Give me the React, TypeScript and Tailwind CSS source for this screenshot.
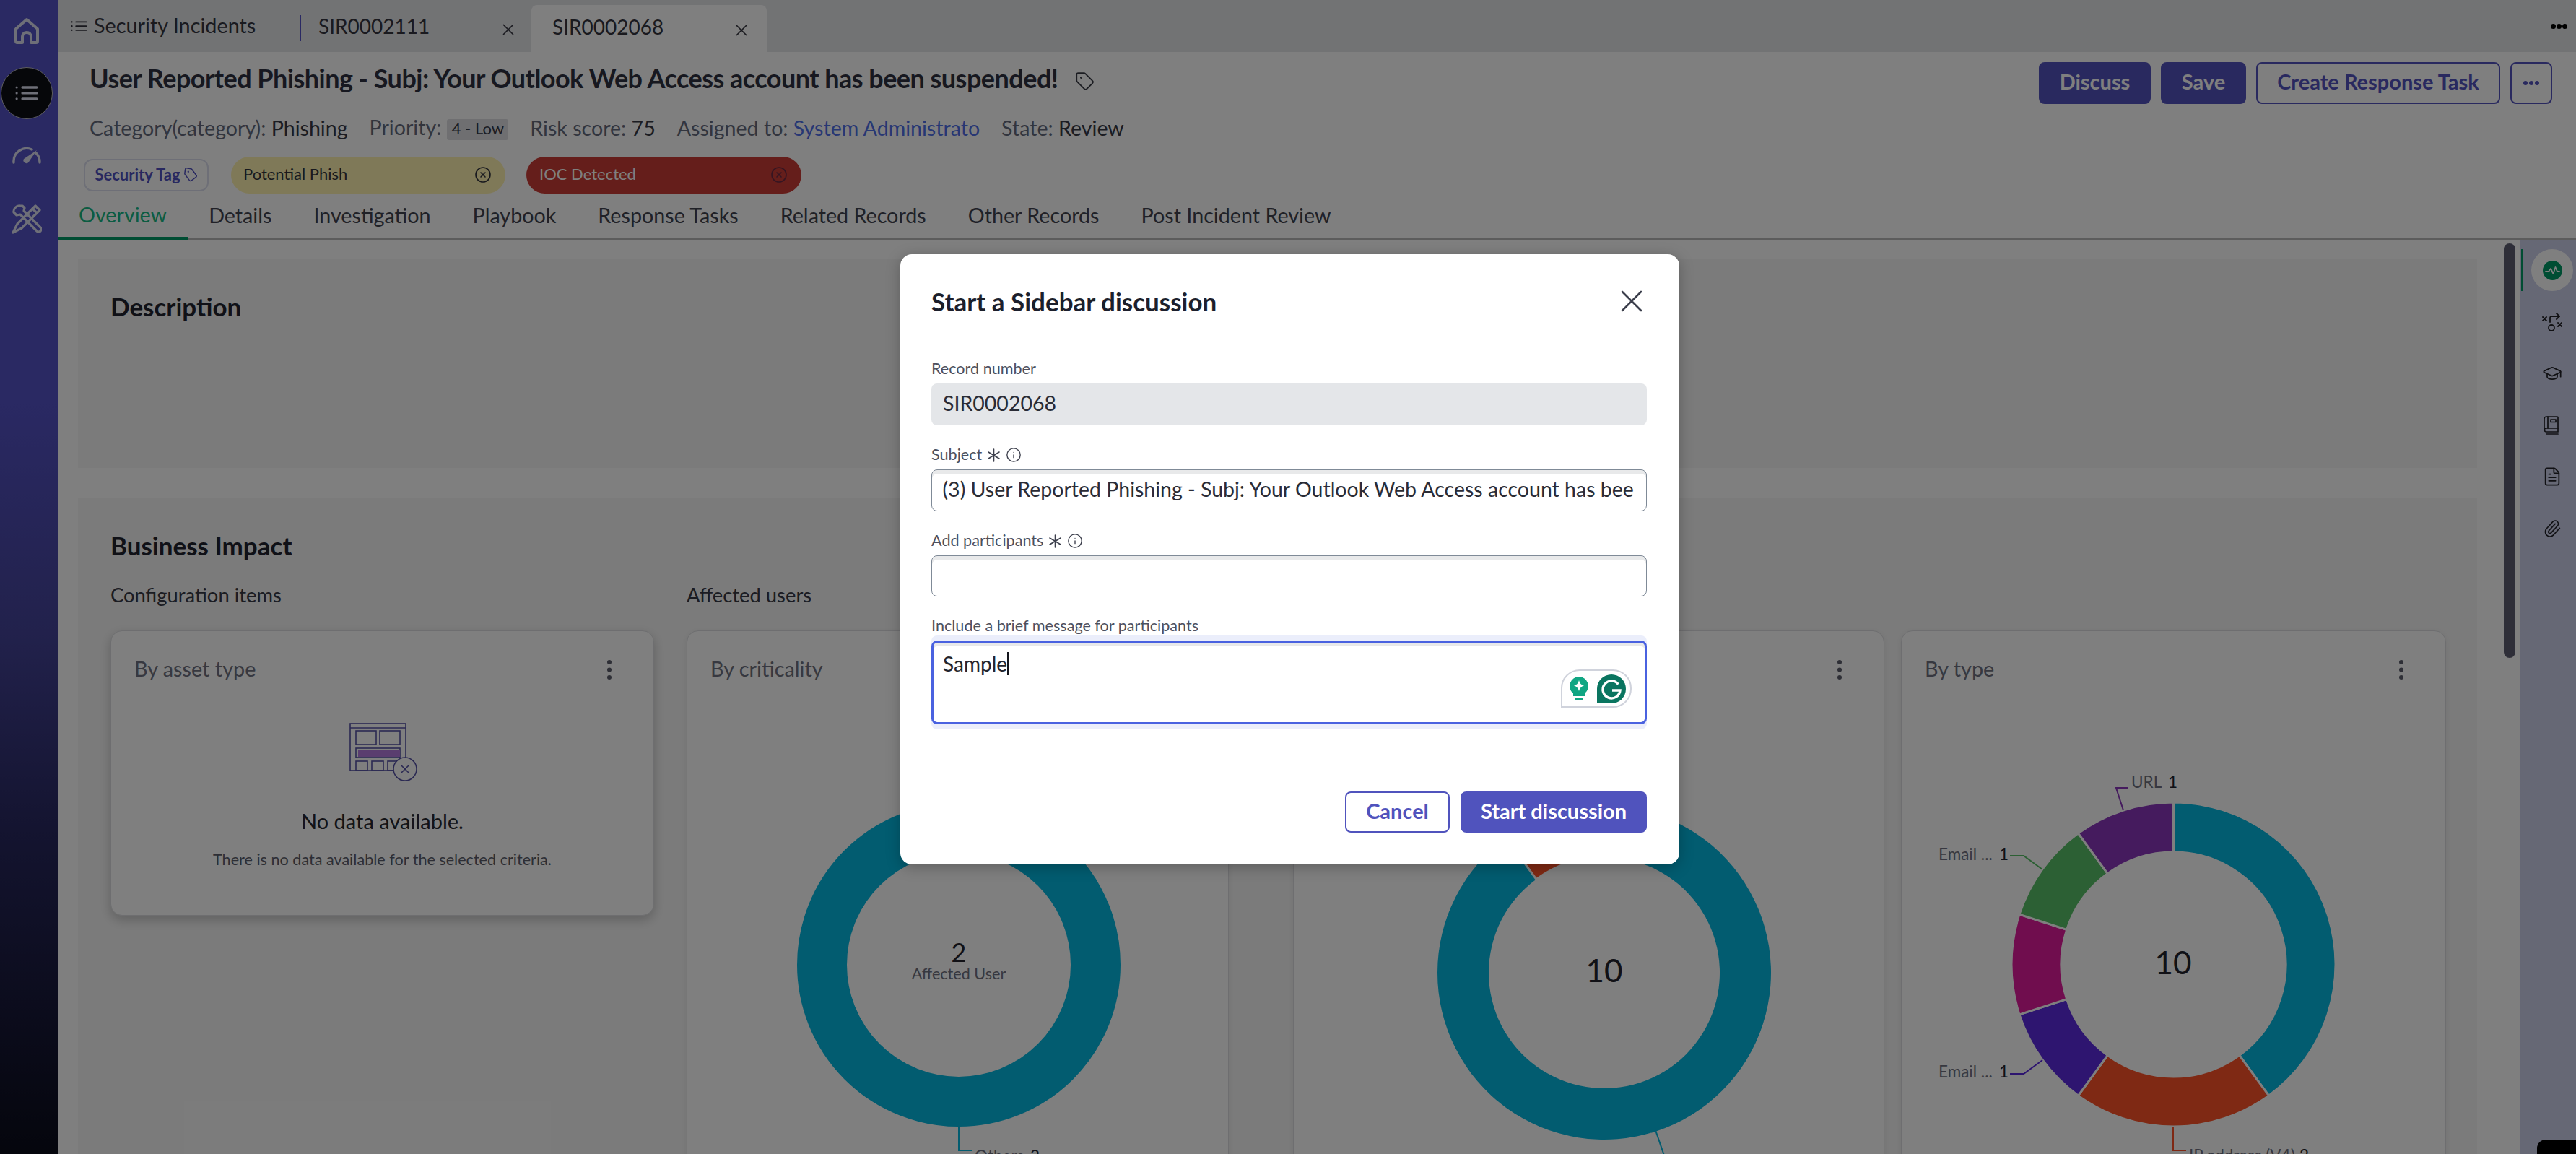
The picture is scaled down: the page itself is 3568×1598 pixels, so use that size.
import React from "react";
import { CircleX, FileText, GraduationCap, Info, Paperclip, Tag, X } from "lucide-react";

const pt = (cx: number, cy: number, r: number, deg: number) => {
  const a = ((deg - 90) * Math.PI) / 180;
  return [cx + r * Math.cos(a), cy + r * Math.sin(a)];
};
const arc = (cx: number, cy: number, R: number, r: number, a0: number, a1: number) => {
  const [x0, y0] = pt(cx, cy, R, a0);
  const [x1, y1] = pt(cx, cy, R, a1);
  const [x2, y2] = pt(cx, cy, r, a1);
  const [x3, y3] = pt(cx, cy, r, a0);
  const large = a1 - a0 > 180 ? 1 : 0;
  return `M${x0} ${y0} A${R} ${R} 0 ${large} 1 ${x1} ${y1} L${x2} ${y2} A${r} ${r} 0 ${large} 0 ${x3} ${y3} Z`;
};

const Kebab = () => (
  <svg width="6" height="27" viewBox="0 0 6 27" className="shrink-0">
    <circle cx="3" cy="3" r="3" fill="#5c5e6c" />
    <circle cx="3" cy="13.5" r="3" fill="#5c5e6c" />
    <circle cx="3" cy="24" r="3" fill="#5c5e6c" />
  </svg>
);

const ListIcon = ({ w, c, sw }: { w: number; c: string; sw: number }) => (
  <svg width={w} height={w * 0.62} viewBox="0 0 32 20" fill="none" stroke={c} strokeLinecap="round">
    <path d="M10 2h20M10 10h20M10 18h20" strokeWidth={sw} />
    <circle cx="2" cy="2" r="1.6" fill={c} stroke="none" />
    <circle cx="2" cy="10" r="1.6" fill={c} stroke="none" />
    <circle cx="2" cy="18" r="1.6" fill={c} stroke="none" />
  </svg>
);

const Required = () => (
  <svg width="19" height="19" viewBox="0 0 19 19" stroke="#3c3f4c" strokeWidth="1.6" strokeLinecap="round" className="ml-[7px] shrink-0">
    <path d="M9.5 1v17M2 5l15 9M17 5L2 14" />
  </svg>
);

const Card = ({ w, h, title, children, shadow }: { w: string; h: string; title: string; children?: React.ReactNode; shadow?: boolean }) => (
  <div className={`${w} ${h} shrink-0 rounded-[16px] border border-[#dcdde0] bg-white ${shadow ? "shadow-[0_6px_16px_rgba(0,0,0,0.22)]" : "shadow-[0_2px_10px_rgba(0,0,0,0.08)]"}`}>
    <div className="flex h-[106px] items-center justify-between pl-[32px] pr-[58px]">
      <span className="text-[28.8px] text-[#6e7180]">{title}</span>
      <Kebab />
    </div>
    {children}
  </div>
);

const Label = ({ children, req }: { children: string; req?: boolean }) => (
  <div className="flex h-[26px] items-center text-[21.6px] leading-none text-[#4d505e]">
    <span>{children}</span>
    {req && <Required />}
    {req && <Info size={22} strokeWidth={1.5} color="#3c3f4c" className="ml-[7px]" />}
  </div>
);

export default function App() {
  return (
    <div className="relative flex h-[1598px] w-[3568px] overflow-hidden bg-white [font-family:Lato,'Noto_Sans',sans-serif]">
      {/* left navigation */}
      <aside className="flex h-full w-[80px] shrink-0 flex-col items-center bg-[linear-gradient(to_bottom,#5452c6_0%,#5452c6_35%,#444398_55%,#282860_72%,#0a0c1a_100%)] text-[#dcdef0]">
        <svg width="40" height="40" viewBox="0 0 40 40" fill="none" stroke="currentColor" strokeWidth="4" strokeLinejoin="round" className="mt-[23px] -translate-x-[3px]">
          <path d="M14 36H7a2 2 0 0 1-2-2V17L20 4l15 13v17a2 2 0 0 1-2 2h-7v-8a6 6 0 0 0-12 0z" />
        </svg>
        <div className="mt-[30px] flex h-[72px] w-[72px] -translate-x-[3px] items-center justify-center rounded-full border border-[#bdbdbd] bg-[#0d0e14]">
          <ListIcon w={32} c="#dcdef0" sw={3.4} />
        </div>
        <svg width="40" height="24" viewBox="0 0 40 24" fill="none" className="mt-[38px] -translate-x-[3px]">
          <path d="M2 22A18 18 0 0 1 27 4M33 9a18 18 0 0 1 5 13" stroke="currentColor" strokeWidth="3.4" strokeLinecap="round" />
          <path d="M34 5L23 21a4 4 0 0 1-7-4z" fill="currentColor" />
        </svg>
        <svg width="42" height="42" viewBox="0 0 42 42" fill="none" stroke="currentColor" strokeWidth="3.2" strokeLinejoin="round" strokeLinecap="round" className="mt-[55px] -translate-x-[3px]">
          <path d="M12 3a8 8 0 0 0-9 9l4 4 5-1 23 23a3.5 3.5 0 0 0 5-5L17 10l1-4-3-3z" />
          <path d="M33 3l6 6-25 25-12 6 6-12z" />
          <path d="M29 7l6 6" />
        </svg>
      </aside>

      <main className="flex min-w-0 flex-1 flex-col text-[#444856]">
        {/* tabs bar */}
        <div className="flex h-[72px] shrink-0 bg-[#e4e6e9] text-[28px] text-[#34343e]">
          <div className="flex w-[335px] items-center gap-[9px] pl-[18px]">
            <ListIcon w={23} c="#30303a" sw={2.6} />
            <span className="text-[28.8px]">Security Incidents</span>
          </div>
          <div className="mt-[21px] h-[36px] w-[2px] bg-[#5452c6]" />
          <div className="flex w-[319px] items-center justify-between pl-[24px] pr-[19px]">
            <span>SIR0002111</span>
            <X size={26} strokeWidth={1.6} className="translate-y-[5px]" />
          </div>
          <div className="mt-[7px] flex w-[326px] items-center justify-between rounded-t-[8px] bg-white pl-[29px] pr-[22px]">
            <span className="-mt-[6px]">SIR0002068</span>
            <X size={26} strokeWidth={1.6} className="translate-y-[2px]" />
          </div>
          <div className="ml-auto mr-[12px] flex items-center gap-[1px]">
            <span className="h-[7px] w-[7px] rounded-full bg-black" />
            <span className="h-[7px] w-[7px] rounded-full bg-black" />
            <span className="h-[7px] w-[7px] rounded-full bg-black" />
          </div>
        </div>

        {/* record header */}
        <header className="h-[260px] shrink-0 bg-white pt-[14px]">
          <div className="flex h-[58px] items-start justify-between pl-[44px] pr-[33px]">
            <div className="-mt-[7px] flex h-[58px] items-center gap-[24px]">
              <h1 className="text-[36px] font-bold tracking-[-0.53px] text-[#2e3140]">User Reported Phishing - Subj: Your Outlook Web Access account has been suspended!</h1>
              <Tag size={27} strokeWidth={1.6} color="#3a3c46" className="mt-[8px]" />
            </div>
            <div className="flex h-[58px] gap-[14px] text-[29px] font-bold">
              <button className="w-[155px] rounded-[8px] bg-[#5252be] pb-[4px] text-white">Discuss</button>
              <button className="w-[118px] rounded-[8px] bg-[#5252be] pb-[4px] text-white">Save</button>
              <button className="w-[338px] rounded-[8px] border-2 border-[#5252be] pb-[4px] text-[#5252be]">Create Response Task</button>
              <button className="flex w-[58px] items-center justify-center gap-[2px] rounded-[8px] border-2 border-[#5252be]">
                <span className="h-[6px] w-[6px] rounded-full bg-[#5252be]" />
                <span className="h-[6px] w-[6px] rounded-full bg-[#5252be]" />
                <span className="h-[6px] w-[6px] rounded-full bg-[#5252be]" />
              </button>
            </div>
          </div>
          <div className="mt-[20px] flex h-[30px] items-center gap-[30px] pl-[44px] text-[28.6px] leading-none text-[#646a7c]">
            <span className="-mt-[3px]">Category(category): <span className="text-[#363844]">Phishing</span></span>
            <span className="flex items-center gap-[8px]">
              <span className="-mt-[6px]">Priority:</span>
              <span className="flex h-[29px] w-[85px] items-center justify-center rounded-[3px] bg-[#dedfe2] pb-[2px] text-[22px] text-[#363844]">4 - Low</span>
            </span>
            <span className="-mt-[3px]">Risk score: <span className="text-[#363844]">75</span></span>
            <span className="-mt-[3px]">Assigned to: <span className="text-[#4f6fe8]">System Administrato</span></span>
            <span className="-mt-[3px]">State: <span className="text-[#363844]">Review</span></span>
          </div>
          <div className="mt-[23px] flex h-[51px] items-center pl-[36px] text-[22px] leading-none">
            <div className="flex h-[45px] w-[173px] items-center justify-center gap-[4px] rounded-[12px] border-2 border-[#dcdfee] pb-[2px] font-bold text-[#5050c0]">
              <span>Security Tag</span>
              <Tag size={20} strokeWidth={1.8} className="rotate-[8deg]" />
            </div>
            <div className="ml-[31px] flex h-[51px] w-[380px] items-center justify-between rounded-full bg-[#fef2b0] pl-[17px] pr-[19px] text-[#30323c]">
              <span className="-mt-[3px]">Potential Phish</span>
              <CircleX size={24} strokeWidth={1.6} className="-mt-[1px]" />
            </div>
            <div className="ml-[29px] flex h-[51px] w-[381px] items-center justify-between rounded-full bg-[#ca3c36] pl-[18px] pr-[19px] text-white">
              <span className="-mt-[3px]">IOC Detected</span>
              <CircleX size={24} strokeWidth={1.6} color="#6a2a44" className="-mt-[1px]" />
            </div>
          </div>
          <nav className="flex h-[64px] border-b-2 border-[#b8b8b8] text-[28.7px] text-[#40424e]">
            <div className="-mb-[2px] flex items-center border-b-4 border-[#009a66] px-[29px] pb-[1px] text-[#16b884]">Overview</div>
            {["Details", "Investigation", "Playbook", "Response Tasks", "Related Records", "Other Records", "Post Incident Review"].map((t) => (
              <div key={t} className="flex items-center px-[29px] pb-[1px]">{t}</div>
            ))}
          </nav>
        </header>

        {/* page body */}
        <div className="flex min-h-0 flex-1">
          <div className="min-w-0 flex-1 overflow-hidden bg-white pl-[28px] pr-[37px] pt-[26px]">
            <section className="h-[290px] bg-[#f7f7f7] px-[45px] pt-[42px]">
              <h2 className="text-[35px] font-bold leading-[48px] text-[#20222e]">Description</h2>
            </section>
            <section className="mt-[41px] h-[920px] bg-[#f7f7f7] pl-[45px] pt-[42px]">
              <h2 className="text-[35px] font-bold leading-[48px] text-[#20222e]">Business Impact</h2>
              <div className="mt-[24px] flex gap-[45px]">
                <div className="w-[753px] shrink-0">
                  <h3 className="h-[42px] text-[27.4px] leading-[42px] text-[#363844]">Configuration items</h3>
                  <div className="mt-[28px]">
                    <Card w="w-[753px]" h="h-[395px]" title="By asset type" shadow>
                      <div className="flex flex-col items-center">
                        <svg width="94" height="82" viewBox="0 0 94 82" fill="none" stroke="#5652a6" strokeWidth="1.6" className="mt-[21px] translate-x-[1px]">
                          <rect x="1" y="1" width="77" height="65" />
                          <path d="M1 7h77" />
                          <rect x="9" y="11" width="28" height="19" />
                          <rect x="42" y="11" width="28" height="19" />
                          <rect x="9" y="35" width="61" height="13" />
                          <rect x="12" y="38" width="58" height="9" fill="#b47ade" stroke="none" />
                          <rect x="9" y="53" width="16" height="13" />
                          <rect x="31" y="53" width="16" height="13" />
                          <rect x="53" y="53" width="16" height="13" />
                          <circle cx="77" cy="64" r="16" fill="#ffffff" />
                          <path d="M72 59l10 10M82 59L72 69" />
                        </svg>
                        <div className="mt-[36px] text-[29px] leading-[36px] text-[#26272e]">No data available.</div>
                        <div className="mt-[21px] text-[21.6px] leading-[28px] text-[#5a5d6a]">There is no data available for the selected criteria.</div>
                      </div>
                    </Card>
                  </div>
                </div>
                <div className="w-[751px] shrink-0">
                  <h3 className="h-[42px] text-[27.4px] leading-[42px] text-[#363844]">Affected users</h3>
                  <div className="mt-[28px]">
                    <Card w="w-[751px]" h="h-[800px]" title="By criticality">
                      <svg width="749" height="640" viewBox="952 980 749 640" className="block">
                        <circle cx="1328" cy="1336" r="189.5" fill="none" stroke="#04b8e0" strokeWidth="69" />
                        <text x="1328" y="1332" textAnchor="middle" fontSize="36" fill="#22232c">2</text>
                        <text x="1328" y="1356" textAnchor="middle" fontSize="21.6" fill="#6e7180">Affected User</text>
                        <path d="M1328 1560V1593H1346" fill="none" stroke="#04b8e0" strokeWidth="2" />
                        <text x="1350" y="1609" fontSize="22.5" fill="#6e7180">Others</text>
                        <text x="1427" y="1609" fontSize="22.5" fill="#22232c">2</text>
                      </svg>
                    </Card>
                  </div>
                </div>
                <div className="ml-[44px] shrink-0">
                  <h3 className="h-[42px] text-[27.4px] leading-[42px] text-[#363844]">Observables</h3>
                  <div className="mt-[28px] flex gap-[23px]">
                    <Card w="w-[819px]" h="h-[800px]" title="By state">
                      <svg width="817" height="640" viewBox="1792 980 817 640" className="block">
                        <path d={arc(2222, 1347, 231, 160, 0, 324)} fill="#04b8e0" />
                        <path d={arc(2222, 1347, 231, 160, 324, 360)} fill="#fe5228" stroke="#ffffff" strokeWidth="3" />
                        <text x="2222" y="1360" textAnchor="middle" fontSize="44" fill="#22232c">10</text>
                        <path d="M2293 1565L2305 1600" fill="none" stroke="#04b8e0" strokeWidth="2" />
                      </svg>
                    </Card>
                    <Card w="w-[755px]" h="h-[800px]" title="By type">
                      <svg width="753" height="640" viewBox="2634 980 753 640" className="block">
                        {[
                          [0, 144, "#04b8e0"],
                          [144, 216, "#fe5228"],
                          [216, 252, "#5c2ae0"],
                          [252, 288, "#e01a9c"],
                          [288, 324, "#58c068"],
                          [324, 360, "#8a36bc"],
                        ].map(([a, b, c]) => (
                          <path key={String(a)} d={arc(3010.5, 1335.5, 224.5, 155.5, a as number, b as number)} fill={c as string} stroke="#ffffff" strokeWidth="3" />
                        ))}
                        <text x="3010" y="1349" textAnchor="middle" fontSize="44" fill="#22232c">10</text>
                        <path d="M2948 1091H2931L2941 1122" fill="none" stroke="#8a36bc" strokeWidth="2" />
                        <text x="2952" y="1091" fontSize="22.5" fill="#6e7180">URL</text>
                        <text x="3003" y="1091" fontSize="22.5" fill="#22232c">1</text>
                        <path d="M2784 1185H2803L2829 1204" fill="none" stroke="#58c068" strokeWidth="2" />
                        <text x="2685" y="1191" fontSize="22.5" fill="#6e7180">Email ...</text>
                        <text x="2769" y="1191" fontSize="22.5" fill="#22232c">1</text>
                        <path d="M2784 1487H2803L2829 1468" fill="none" stroke="#5c2ae0" strokeWidth="2" />
                        <text x="2685" y="1492" fontSize="22.5" fill="#6e7180">Email ...</text>
                        <text x="2769" y="1492" fontSize="22.5" fill="#22232c">1</text>
                        <path d="M3010 1560V1593H3028" fill="none" stroke="#fe5228" strokeWidth="2" />
                        <text x="3032" y="1608" fontSize="22.5" fill="#6e7180">IP address (V4)</text>
                        <text x="3185" y="1608" fontSize="22.5" fill="#22232c">2</text>
                      </svg>
                    </Card>
                  </div>
                </div>
              </div>
            </section>
          </div>

          {/* scrollbar */}
          <div className="w-[22px] shrink-0 bg-white pr-[6px] pt-[5px]">
            <div className="h-[574px] w-[16px] rounded-[8px] bg-[#5c5c70]" />
          </div>

          {/* right rail */}
          <div className="relative flex w-[78px] shrink-0 flex-col items-center bg-[#ccd0ea] pl-[12px] pt-[13px] text-[#222228]">
            <div className="absolute left-[2px] top-[13px] h-[58px] w-[3px] bg-[#009a66]" />
            <div className="flex h-[58px] w-[58px] items-center justify-center rounded-full bg-white">
              <svg width="27" height="27" viewBox="0 0 27 27" fill="none">
                <circle cx="13.5" cy="13.5" r="13.5" fill="#009a66" />
                <path d="M4 15h4l3-4 3.5 7 3-9 2.5 6h3" stroke="#ffffff" strokeWidth="1.8" strokeLinejoin="round" strokeLinecap="round" />
              </svg>
            </div>
            <div className="mt-[7px] flex h-[71.5px] items-center">
              <svg width="28" height="26" viewBox="0 0 28 26" fill="none" stroke="currentColor" strokeWidth="1.8" strokeLinecap="round" strokeLinejoin="round">
                <path d="M1 6l5 5M6 6l-5 5" />
                <path d="M11 13V7a2 2 0 0 1 2-2h11" />
                <path d="M20 1l4 4-4 4" />
                <circle cx="13" cy="21" r="4" />
                <path d="M22 14l5 5M27 14l-5 5" />
              </svg>
            </div>
            <div className="flex h-[71.5px] items-center"><GraduationCap size={28} strokeWidth={1.5} /></div>
            <div className="flex h-[71.5px] items-center">
              <svg width="24" height="26" viewBox="0 0 24 26" fill="none" stroke="currentColor" strokeWidth="1.7" strokeLinejoin="round" strokeLinecap="round">
                <path d="M4 1h15a1 1 0 0 1 1 1v20H4a3 3 0 0 1-3-3V4a3 3 0 0 1 3-3z" />
                <path d="M1 20a3 3 0 0 1 3-3h16" />
                <path d="M6 1v16" />
                <rect x="10" y="5" width="7" height="3.5" />
                <path d="M4 25h16" />
              </svg>
            </div>
            <div className="flex h-[71.5px] items-center"><FileText size={28} strokeWidth={1.5} /></div>
            <div className="flex h-[71.5px] items-center"><Paperclip size={26} strokeWidth={1.5} className="-rotate-[2deg]" /></div>
          </div>
        </div>
      </main>

      {/* scrim */}
      <div className="absolute inset-0 bg-black/50" />
      <div className="absolute bottom-0 right-0 h-[20px] w-[54px] rounded-tl-[12px] bg-black" />

      {/* dialog */}
      <div className="absolute left-[1247px] top-[352px] h-[845px] w-[1079px] rounded-[16px] bg-white pl-[43px] pr-[45px] pt-[41px] shadow-[0_4px_20px_rgba(0,0,0,0.25)]">
        <div className="flex h-[48px] items-center justify-between pr-[6px]">
          <h2 className="text-[35px] font-bold leading-none text-[#1c1f2c]">Start a Sidebar discussion</h2>
          <svg width="30" height="30" viewBox="0 0 30 30" stroke="#3c3f4c" strokeWidth="2.6" strokeLinecap="round">
            <path d="M2 2l26 26M28 2L2 28" />
          </svg>
        </div>

        <div className="mt-[57px]"><Label>Record number</Label></div>
        <div className="mt-[7px] flex h-[58px] items-center rounded-[8px] bg-[#e4e6e9] px-[16px] pb-[4px] text-[28.5px] leading-none text-[#2a2c36]">SIR0002068</div>

        <div className="mt-[28px]"><Label req>Subject</Label></div>
        <div className="mt-[7px] flex h-[58px] items-center overflow-hidden rounded-[8px] border-[1.5px] border-[#7f8a97] bg-white pb-[3px] pl-[14.5px] pr-[16.5px] text-[28.5px] leading-none text-[#2a2c36] shadow-[inset_0_5px_0_#e8e9ea]">
          <div className="overflow-hidden whitespace-nowrap">(3) User Reported Phishing - Subj: Your Outlook Web Access account has been suspended!</div>
        </div>

        <div className="mt-[28px]"><Label req>Add participants</Label></div>
        <div className="mt-[7px] h-[57px] rounded-[8px] border-[1.5px] border-[#7f8a97] bg-white shadow-[inset_0_5px_0_#e8e9ea]" />

        <div className="mt-[28px]"><Label>Include a brief message for participants</Label></div>
        <div className="rounded-[8px] bg-[#ebeefb] py-[7px]">
          <div className="relative h-[116px] rounded-[8px] border-[3px] border-[#4a62e0] bg-white pl-[13px] pt-[12px] text-[28px] leading-[34px] text-[#23252e] shadow-[inset_0_5px_0_#e8e9ea]">
            <div className="flex items-center">
              <span>Sample</span>
              <span className="h-[32px] w-[2px] bg-[#14151c]" />
            </div>
            <div className="absolute right-[18px] top-[37px] flex h-[53px] w-[98px] items-center justify-end gap-[12px] rounded-[26px] rounded-bl-none border-2 border-[#d0d3dc] bg-white pr-[6px]">
              <svg width="26" height="34" viewBox="0 0 26 34">
                <path d="M13 0a13 13 0 0 0-8 23.2V27h16v-3.8A13 13 0 0 0 13 0z" fill="#11a683" />
                <path d="M13 5c1 4 3 6.500 7 7.500-4 1-6 3.500-7 7.500-1-4-3-6.500-7-7.500 4-1 6-3.500 7-7.500z" fill="#ffffff" />
                <rect x="7" y="29" width="12" height="4" rx="1.500" fill="#11a683" />
              </svg>
              <svg width="40" height="40" viewBox="0 0 40 40">
                <path d="M20 0a20 20 0 0 1 20 20 20 20 0 0 1-20 20H0V20A20 20 0 0 1 20 0z" fill="#0a7560" />
                <path d="M29.500 13.500A12 12 0 1 0 32 22H21" fill="none" stroke="#ffffff" strokeWidth="3.400" />
              </svg>
            </div>
          </div>
        </div>

        <div className="mt-[86px] flex justify-end gap-[15px] text-[29px] font-bold">
          <button className="h-[57px] w-[145px] rounded-[8px] border-2 border-[#5053bd] bg-white pb-[4px] text-[#5053bd]">Cancel</button>
          <button className="h-[57px] w-[258px] rounded-[8px] bg-[#5053bd] pb-[4px] text-white">Start discussion</button>
        </div>
      </div>
    </div>
  );
}
